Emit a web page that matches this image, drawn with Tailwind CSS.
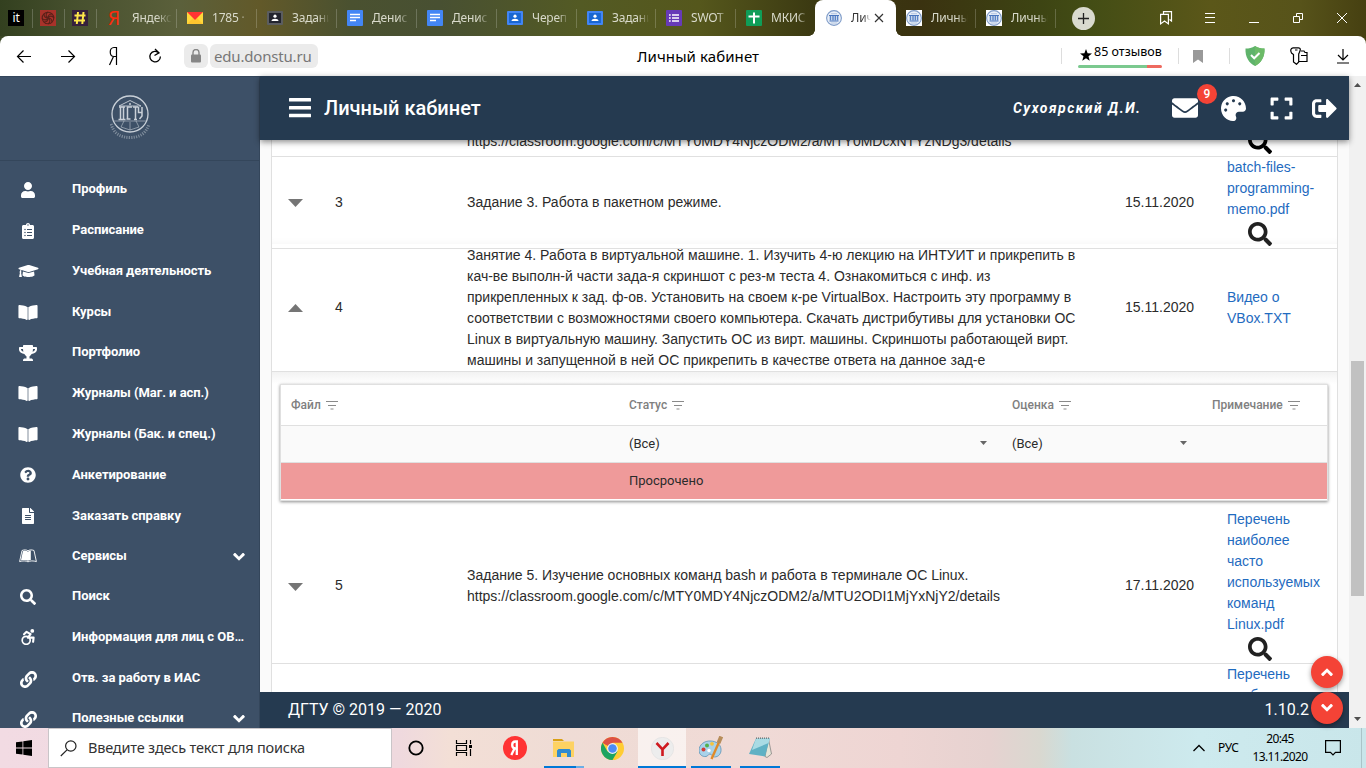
<!DOCTYPE html>
<html lang="ru">
<head>
<meta charset="utf-8">
<title>Личный кабинет</title>
<script src="https://cdn.jsdelivr.net/npm/@tailwindcss/browser@4"></script>
</head>
<body class="w-[1366px] h-[768px] overflow-hidden flex flex-col bg-white font-['Roboto','Liberation_Sans',sans-serif]">

<svg class="hidden">
  <symbol id="user" viewBox="0 0 448 512"><path d="M224 256c70.7 0 128-57.3 128-128S294.7 0 224 0 96 57.3 96 128s57.3 128 128 128zm89.6 32h-16.7c-22.2 10.2-46.9 16-72.9 16s-50.6-5.8-72.9-16h-16.7C60.2 288 0 348.2 0 422.4V464c0 26.5 21.5 48 48 48h352c26.5 0 48-21.5 48-48v-41.6c0-74.2-60.2-134.4-134.4-134.4z"/></symbol>
  <symbol id="clipboard" viewBox="0 0 384 512"><path d="M336 64h-80c0-35.3-28.7-64-64-64s-64 28.7-64 64H48C21.5 64 0 85.5 0 112v352c0 26.5 21.5 48 48 48h288c26.5 0 48-21.5 48-48V112c0-26.5-21.5-48-48-48zM96 424c-13.3 0-24-10.7-24-24s10.7-24 24-24 24 10.7 24 24-10.7 24-24 24zm0-96c-13.3 0-24-10.7-24-24s10.7-24 24-24 24 10.7 24 24-10.7 24-24 24zm0-96c-13.3 0-24-10.7-24-24s10.7-24 24-24 24 10.7 24 24-10.7 24-24 24zm96-192c13.3 0 24 10.7 24 24s-10.7 24-24 24-24-10.7-24-24 10.7-24 24-24zm128 368c0 4.4-3.6 8-8 8H168c-4.4 0-8-3.6-8-8v-16c0-4.4 3.6-8 8-8h144c4.4 0 8 3.6 8 8v16zm0-96c0 4.4-3.6 8-8 8H168c-4.4 0-8-3.6-8-8v-16c0-4.4 3.6-8 8-8h144c4.4 0 8 3.6 8 8v16zm0-96c0 4.4-3.6 8-8 8H168c-4.4 0-8-3.6-8-8v-16c0-4.4 3.6-8 8-8h144c4.4 0 8 3.6 8 8v16z"/></symbol>
  <symbol id="cap" viewBox="0 0 640 512"><path d="M622.34 153.2L343.4 67.5c-15.2-4.67-31.6-4.67-46.79 0L17.66 153.2c-23.54 7.23-23.54 38.36 0 45.59l48.63 14.94c-10.67 13.19-17.23 29.28-17.88 46.9C38.78 266.15 32 276.11 32 288c0 10.78 5.68 19.85 13.86 25.65L20.33 428.53C18.11 438.52 25.71 448 35.94 448h56.11c10.24 0 17.84-9.48 15.62-19.47L82.14 313.65C90.32 307.85 96 298.78 96 288c0-11.57-6.47-21.25-15.66-26.87.76-15.02 8.44-28.3 20.69-36.72L296.6 284.5c9.06 2.78 26.44 6.25 46.79 0l278.95-85.7c23.55-7.24 23.55-38.36 0-45.6zM352.79 315.09c-28.53 8.76-52.84 3.92-65.59 0l-145.02-44.55L128 384c0 35.35 85.96 64 192 64s192-28.65 192-64l-14.18-113.47-145.03 44.56z"/></symbol>
  <symbol id="book" viewBox="0 0 576 512"><path d="M542.22 32.05c-54.8 3.11-163.72 14.43-230.96 55.59-4.64 2.84-7.27 7.89-7.27 13.17v363.87c0 11.55 12.63 18.85 23.28 13.49 69.18-34.82 169.23-44.32 218.7-46.92 16.89-.89 30.02-14.43 30.02-30.66V62.75c.01-17.71-15.35-31.74-33.77-30.7zM264.73 87.64C197.5 46.48 88.58 35.17 33.78 32.05 15.36 31.01 0 45.04 0 62.75V400.6c0 16.24 13.13 29.78 30.02 30.66 49.49 2.6 149.59 12.11 218.77 46.95 10.62 5.35 23.21-1.94 23.21-13.46V100.63c0-5.29-2.62-10.14-7.27-12.99z"/><path d="M268 90h40v380h-40z" opacity=".6"/></symbol>
  <symbol id="trophy" viewBox="0 0 576 512"><path d="M552 64H448V24c0-13.3-10.7-24-24-24H152c-13.3 0-24 10.7-24 24v40H24C10.7 64 0 74.7 0 88v56c0 35.7 22.5 72.4 61.9 100.7 31.5 22.7 69.8 37.1 110 41.7C203.3 338.5 240 360 240 360v72h-48c-35.3 0-64 20.7-64 56v12c0 6.6 5.4 12 12 12h296c6.6 0 12-5.4 12-12v-12c0-35.3-28.7-56-64-56h-48v-72s36.7-21.5 68.1-73.6c40.3-4.6 78.6-19 110-41.7 39.3-28.3 61.9-65 61.9-100.7V88c0-13.3-10.7-24-24-24zM99.3 192.8C74.9 175.2 64 155.6 64 144v-16h64.2c1 32.6 5.8 61.2 12.8 86.2-15.1-5.2-29.2-12.4-41.7-21.4zM512 144c0 16.1-17.7 36.1-35.3 48.8-12.5 9-26.7 16.2-41.8 21.4 7-25 11.8-53.6 12.8-86.2H512v16z"/></symbol>
  <symbol id="question" viewBox="0 0 512 512"><path d="M504 256c0 136.997-111.043 248-248 248S8 392.997 8 256C8 119.083 119.043 8 256 8s248 111.083 248 248zM262.655 90c-54.497 0-89.255 22.957-116.549 63.758-3.536 5.286-2.353 12.415 2.715 16.258l34.699 26.31c5.205 3.947 12.621 3.008 16.665-2.122 17.864-22.658 30.113-35.797 57.303-35.797 20.429 0 45.698 13.148 45.698 32.958 0 14.976-12.363 22.667-32.534 33.976C247.128 238.528 216 254.941 216 296v4c0 6.627 5.373 12 12 12h56c6.627 0 12-5.373 12-12v-1.333c0-28.462 83.186-29.647 83.186-106.667 0-58.002-60.165-102-116.531-102zM256 338c-25.365 0-46 20.635-46 46 0 25.364 20.635 46 46 46s46-20.636 46-46c0-25.365-20.635-46-46-46z"/></symbol>
  <symbol id="file" viewBox="0 0 384 512"><path d="M224 136V0H24C10.7 0 0 10.7 0 24v464c0 13.3 10.7 24 24 24h336c13.3 0 24-10.7 24-24V160H248c-13.2 0-24-10.8-24-24zm64 236c0 6.6-5.4 12-12 12H108c-6.6 0-12-5.4-12-12v-8c0-6.6 5.4-12 12-12h168c6.6 0 12 5.4 12 12v8zm0-64c0 6.6-5.4 12-12 12H108c-6.6 0-12-5.4-12-12v-8c0-6.6 5.4-12 12-12h168c6.6 0 12 5.4 12 12v8zm0-72v8c0 6.6-5.4 12-12 12H108c-6.6 0-12-5.4-12-12v-8c0-6.6 5.4-12 12-12h168c6.6 0 12 5.4 12 12zm96-114.1v6.1H256V0h6.1c6.4 0 12.5 2.5 17 7l97.9 98c4.5 4.5 7 10.6 7 16.9z"/></symbol>
  <symbol id="leanpub" viewBox="0 0 18 16"><path d="M3 2.500C5.300 1.600 7.600 1.700 9 2.800c1.400-1.100 3.700-1.200 6-.3L17.400 13.600c-3-1-6.300-.9-8.400.2-2.100-1.100-5.400-1.200-8.400-.2z" fill="none" stroke="currentColor" stroke-width=".9"/><path d="M3.900 3.200C6 2.500 8 2.800 9 3.700c.7-.6 1.700-1 2.800-1.100v9.300c-1 .1-2 .4-2.800.9-1.800-1-4.400-1.200-7-.5z"/></symbol>
  <symbol id="search" viewBox="0 0 512 512"><path d="M505 442.700L405.300 343c-4.500-4.500-10.600-7-17-7H372c27.600-35.300 44-79.700 44-128C416 93.100 322.900 0 208 0S0 93.100 0 208s93.100 208 208 208c48.300 0 92.700-16.400 128-44v16.300c0 6.400 2.500 12.500 7 17l99.700 99.700c9.400 9.400 24.600 9.400 33.900 0l28.300-28.300c9.400-9.400 9.400-24.600.1-34zM208 336c-70.700 0-128-57.200-128-128 0-70.700 57.200-128 128-128 70.700 0 128 57.200 128 128 0 70.700-57.200 128-128 128z"/></symbol>
  <symbol id="access" viewBox="0 0 16 16"><circle cx="12.300" cy="1.900" r="1.900"/><path d="M4 5.300L6.600 2.800l4 2.300-2.800 3.500h5.800l-.5 4.200" fill="none" stroke="currentColor" stroke-width="2.100" stroke-linecap="round" stroke-linejoin="round"/><circle cx="6.200" cy="11.300" r="4" fill="none" stroke="currentColor" stroke-width="1.700"/></symbol>
  <symbol id="link" viewBox="0 0 512 512"><path d="M326.612 185.391c59.747 59.809 58.927 155.698.36 214.590-.11.12-.24.25-.36.37l-67.2 67.2c-59.270 59.270-155.699 59.262-214.960 0-59.270-59.260-59.270-155.700 0-214.960l37.106-37.106c9.840-9.840 26.786-3.300 27.294 10.606.648 17.722 3.826 35.527 9.690 52.721 1.986 5.822.567 12.262-3.783 16.612l-13.087 13.087c-28.026 28.026-28.905 73.660-1.155 101.960 28.024 28.579 74.086 28.749 102.325.51l67.200-67.190c28.191-28.191 28.073-73.757 0-101.830-3.701-3.694-7.429-6.564-10.341-8.569a16.037 16.037 0 0 1-6.947-12.606c-.396-10.567 3.348-21.456 11.698-29.806l21.054-21.055c5.521-5.521 14.182-6.199 20.584-1.731a152.482 152.482 0 0 1 20.522 17.197zM467.547 44.449c-59.261-59.262-155.690-59.270-214.960 0l-67.200 67.200c-.12.12-.25.25-.36.37-58.566 58.892-59.387 154.781.36 214.590a152.454 152.454 0 0 0 20.521 17.196c6.402 4.468 15.064 3.789 20.584-1.731l21.054-21.055c8.350-8.350 12.094-19.239 11.698-29.806a16.037 16.037 0 0 0-6.947-12.606c-2.912-2.005-6.640-4.875-10.341-8.569-28.073-28.073-28.191-73.639 0-101.830l67.200-67.190c28.239-28.239 74.300-28.069 102.325.51 27.750 28.300 26.872 73.934-1.155 101.960l-13.087 13.087c-4.350 4.350-5.769 10.790-3.783 16.612 5.864 17.194 9.042 34.999 9.690 52.721.509 13.906 17.454 20.446 27.294 10.606l37.106-37.106c59.271-59.259 59.271-155.699.001-214.959z"/></symbol>
  <symbol id="chev" viewBox="0 0 448 512"><path d="M207.029 381.476L12.686 187.132c-9.373-9.373-9.373-24.569 0-33.941l42.667-42.667c9.357-9.357 24.522-9.375 33.901-.04L224 244.505l134.745-134.021c9.379-9.335 24.544-9.317 33.901.04l42.667 42.667c9.373 9.373 9.373 24.569 0 33.941L240.971 381.476c-9.373 9.372-24.569 9.372-33.942 0z"/></symbol>
  <symbol id="mail" viewBox="0 0 512 512"><path d="M502.300 190.800c3.900-3.100 9.700-.2 9.700 4.700V400c0 26.500-21.500 48-48 48H48c-26.500 0-48-21.500-48-48V195.600c0-5 5.700-7.800 9.700-4.700 22.400 17.400 52.100 39.500 154.100 113.600 21.100 15.400 56.700 47.800 92.200 47.600 35.700.3 72-32.800 92.300-47.600 102-74.100 131.600-96.300 154-113.700zM256 320c23.200.4 56.600-29.200 73.400-41.400 132.700-96.300 142.800-104.700 173.400-128.700 5.800-4.500 9.200-11.500 9.200-18.900v-19c0-26.500-21.500-48-48-48H48c-26.500 0-48 21.500-48 48v19c0 7.400 3.400 14.300 9.200 18.900 30.600 23.900 40.700 32.400 173.400 128.700 16.800 12.200 50.200 41.800 73.400 41.400z"/></symbol>
  <symbol id="palette" viewBox="0 0 512 512"><path d="M204.300 5C104.900 24.400 24.800 104.300 5.200 203.400c-37 187 131.700 326.400 258.800 306.700 41.200-6.400 61.400-54.600 42.500-91.700-23.100-45.400 9.900-98.400 60.900-98.400h79.700c35.800 0 64.800-29.600 64.900-65.300C511.500 97.100 368.100-26.900 204.300 5zM96 320c-17.700 0-32-14.300-32-32s14.300-32 32-32 32 14.300 32 32-14.300 32-32 32zm32-128c-17.700 0-32-14.300-32-32s14.300-32 32-32 32 14.300 32 32-14.300 32-32 32zm128-64c-17.700 0-32-14.300-32-32s14.300-32 32-32 32 14.300 32 32-14.300 32-32 32zm128 64c-17.700 0-32-14.300-32-32s14.300-32 32-32 32 14.300 32 32-14.300 32-32 32z"/></symbol>
  <symbol id="expand" viewBox="0 0 448 512"><path d="M0 180V56c0-13.300 10.700-24 24-24h124c6.600 0 12 5.400 12 12v40c0 6.600-5.400 12-12 12H64v84c0 6.600-5.400 12-12 12H12c-6.600 0-12-5.400-12-12zM288 44v40c0 6.600 5.400 12 12 12h84v84c0 6.600 5.400 12 12 12h40c6.600 0 12-5.400 12-12V56c0-13.300-10.700-24-24-24H300c-6.600 0-12 5.400-12 12zm148 276h-40c-6.600 0-12 5.400-12 12v84h-84c-6.600 0-12 5.400-12 12v40c0 6.600 5.400 12 12 12h124c13.300 0 24-10.700 24-24V332c0-6.600-5.400-12-12-12zM160 468v-40c0-6.600-5.400-12-12-12H64v-84c0-6.600-5.400-12-12-12H12c-6.600 0-12 5.400-12 12v124c0 13.300 10.700 24 24 24h124c6.600 0 12-5.400 12-12z"/></symbol>
  <symbol id="signout" viewBox="0 0 512 512"><path d="M497 273L329 441c-15 15-41 4.500-41-17v-96H152c-13.300 0-24-10.700-24-24v-96c0-13.300 10.700-24 24-24h136V88c0-21.400 25.900-32 41-17l168 168c9.300 9.400 9.300 24.600 0 34zM192 436v-40c0-6.600-5.400-12-12-12H96c-17.700 0-32-14.300-32-32V160c0-17.700 14.300-32 32-32h84c6.600 0 12-5.400 12-12V76c0-6.600-5.400-12-12-12H96c-53 0-96 43-96 96v192c0 53 43 96 96 96h84c6.600 0 12-5.400 12-12z"/></symbol>
  <symbol id="filter" viewBox="0 0 12 9"><path d="M0 .5h12M2 4.500h8M4.500 8h3" stroke="currentColor" fill="none"/></symbol>
  <symbol id="docs" viewBox="0 0 16 16"><rect width="16" height="16" rx="1" fill="#4386f5"/><path d="M3 4.500h10M3 7.500h10M3 10.500h6" stroke="#fff" stroke-width="1.700" fill="none"/></symbol>
  <symbol id="room" viewBox="0 0 16 16"><rect y="1" width="16" height="14" rx="1" fill="#4285f4"/><rect x="2" y="3" width="12" height="10" fill="#1967d2"/><circle cx="8" cy="6.200" r="1.600" fill="#fff"/><path d="M4.500 11c0-3 7-3 7 0z" fill="#fff"/></symbol>
  <symbol id="dstu" viewBox="0 0 16 16"><circle cx="8" cy="8" r="7.400" fill="#e8eef7" stroke="#7e9bc8" stroke-width="1.100"/><path d="M3 5.500h10M3.500 11h9" stroke="#4a76bd"/><path d="M4.500 6v4.500M7 6v4.500M9.300 6v4.500M11.600 6v4.500" stroke="#5b84c6" stroke-width="1.500"/><path d="M5 3.700h6M5 13h6" stroke="#a7bcdc" stroke-width=".8"/></symbol>
</svg>

<!-- Browser tabs -->
<div class="h-9 shrink-0 flex items-center bg-[linear-gradient(90deg,#33401f_0,#48512f_80px,#5b603b_180px,#625929_260px,#4a5130_350px,#485032_440px,#535a24_580px,#55571c_700px,#3c3a12_810px,#3a3210_920px,#3d4413_1040px,#434d15_1090px,#5b5719_1210px,#57531a_1300px,#464011_1366px)] text-[12px] tracking-[-0.200px] text-[#d9dacb] font-['Noto_Sans',sans-serif]">
  <div class="w-[33px] h-[19px] flex items-center pl-2 border-r border-white/20"><div class="size-4 bg-black text-white text-[12px] leading-[15px] text-center">it</div></div>
  <div class="w-8 h-[19px] flex items-center pl-[7px] border-r border-white/20"><svg class="size-4" viewBox="0 0 16 16"><rect width="16" height="16" fill="#a8322a"/><g fill="none" stroke="#5a2119" stroke-width="1.100"><circle cx="8" cy="8" r="5.800"/><path d="M8 2c-3 2-2 5 0 6M14 8c-2-3-5-2-6 0M8 14c3-2 2-5 0-6M2 8c2 3 5 2 6 0M4 4c0 3 2 4 4 4M12 4c-3 0-4 2-4 4M12 12c0-3-2-4-4-4M4 12c3 0 4-2 4-4"/></g></svg></div>
  <div class="w-8 h-[19px] flex items-center pl-[7px] border-r border-white/20"><svg class="size-4" viewBox="0 0 16 16"><rect width="16" height="16" fill="#36203d"/><path d="M6 2L4.800 14M11.500 2L10.300 14M2.500 5.500h11M2 10.500h11" stroke="#ffe74a" stroke-width="2" fill="none"/></svg></div>
  <div class="w-20 h-[19px] flex items-center pl-2.5 border-r border-white/20"><span class="w-[25px] pl-px text-[#fc2b0d] text-[19px] leading-4">Я</span><span class="w-[40px] whitespace-nowrap mask-r-from-60%">Яндекс</span></div>
  <div class="w-20 h-[19px] flex items-center pl-2.5 border-r border-white/20 gap-[9px]"><svg class="w-4 h-3" viewBox="0 0 16 12"><rect width="16" height="12" fill="#ffd83b"/><path d="M0 12l6-6 2 2 2-2 6 6z" fill="#ffc52e"/><path d="M0 0h16L8 8z" fill="#f33"/></svg><span class="w-[35px] whitespace-nowrap mask-r-from-80%">1785 ·</span></div>
  <div class="w-20 h-[19px] flex items-center pl-2.5 border-r border-white/20 gap-[9px]"><svg class="size-4 shrink-0" viewBox="0 0 16 16"><rect y="1" width="16" height="14" rx="1" fill="#5b5d60"/><rect x="2" y="3" width="12" height="10" fill="#23252f"/><circle cx="8" cy="6.200" r="1.600" fill="#fff"/><path d="M4.500 11c0-3 7-3 7 0z" fill="#fff"/></svg><span class="w-[37px] whitespace-nowrap mask-r-from-70%">Задани</span></div>
  <div class="w-20 h-[19px] flex items-center pl-2.5 border-r border-white/20 gap-[9px]"><svg class="size-4 shrink-0"><use href="#docs"/></svg><span class="w-[37px] whitespace-nowrap mask-r-from-70%">Денис</span></div>
  <div class="w-20 h-[19px] flex items-center pl-2.5 border-r border-white/20 gap-[9px]"><svg class="size-4 shrink-0"><use href="#docs"/></svg><span class="w-[37px] whitespace-nowrap mask-r-from-70%">Денис</span></div>
  <div class="w-20 h-[19px] flex items-center pl-2.5 border-r border-white/20 gap-[9px]"><svg class="size-4 shrink-0"><use href="#room"/></svg><span class="w-[37px] whitespace-nowrap mask-r-from-70%">Череп</span></div>
  <div class="w-[79px] h-[19px] flex items-center pl-2.5 border-r border-white/20 gap-[9px]"><svg class="size-4 shrink-0"><use href="#room"/></svg><span class="w-[37px] whitespace-nowrap mask-r-from-70%">Задани</span></div>
  <div class="w-20 h-[19px] flex items-center pl-2.5 border-r border-white/20 gap-[9px]"><svg class="size-4 shrink-0" viewBox="0 0 16 16"><rect width="16" height="16" rx="1" fill="#673ab7"/><path d="M6 5h7M6 8h7M6 11h7M3 5h1.700M3 8h1.700M3 11h1.700" stroke="#fff" stroke-width="1.500" fill="none"/></svg><span class="w-[37px] whitespace-nowrap mask-r-from-70%">SWOT</span></div>
  <div class="w-[79px] h-[19px] flex items-center pl-2.5 gap-[9px]"><svg class="size-4 shrink-0" viewBox="0 0 16 16"><rect width="16" height="16" rx="1" fill="#0f9d58"/><path d="M8 2.500v11M2.500 6.500h11" stroke="#fff" stroke-width="2" fill="none"/></svg><span class="w-[37px] whitespace-nowrap mask-r-from-70%">МКИС</span></div>
  <div class="relative w-[81px] h-9 flex items-center pl-[11px] bg-white text-[#333] rounded-t-lg">
    <div class="absolute -left-1.5 bottom-0 size-1.5 bg-[radial-gradient(circle_at_0_0,transparent_5.500px,white_6px)]"></div>
    <div class="absolute -right-1.5 bottom-0 size-1.5 bg-[radial-gradient(circle_at_100%_0,transparent_5.500px,white_6px)]"></div>
    <svg class="size-4 shrink-0"><use href="#dstu"/></svg><span class="ml-[9px] w-[20px] whitespace-nowrap mask-r-from-60%">Лич</span>
    <svg class="ml-[3px] size-2.5" viewBox="0 0 10 10"><path d="M1 1l8 8M9 1L1 9" stroke="#333" stroke-width="1.200"/></svg>
  </div>
  <div class="w-20 h-[19px] flex items-center pl-2.5 border-r border-white/20 gap-[9px]"><svg class="size-4 shrink-0 bg-white"><use href="#dstu"/></svg><span class="w-[37px] whitespace-nowrap mask-r-from-70%">Личны</span></div>
  <div class="w-20 h-[19px] flex items-center pl-2.5 border-r border-white/20 gap-[9px]"><svg class="size-4 shrink-0 bg-white"><use href="#dstu"/></svg><span class="w-[37px] whitespace-nowrap mask-r-from-70%">Личны</span></div>
  <svg class="ml-4 size-[23px]" viewBox="0 0 23 23"><circle cx="11.500" cy="11.500" r="11.500" fill="#d9dacf"/><path d="M6 11.500h11M11.500 6v11" stroke="#222" stroke-width="1.300"/></svg>
  <div class="ml-[49px] flex text-white">
    <div class="w-11 flex justify-center"><svg class="size-4" viewBox="0 0 16 16" fill="none" stroke="currentColor" stroke-width="1.200"><path d="M5.500 4V1.600h8V11l-2-1.500"/><path d="M2.600 4.300h7.800v9.600L6.500 11l-3.900 2.900z"/></svg></div>
    <div class="w-11 flex justify-center"><svg class="size-4" viewBox="0 0 16 16" stroke="currentColor"><path d="M3 3.500h10M3 7.500h10M3 12.500h10"/></svg></div>
    <div class="w-11 flex justify-center"><svg class="size-4" viewBox="0 0 16 16" stroke="currentColor"><path d="M3 12.500h10"/></svg></div>
    <div class="w-11 flex justify-center"><svg class="size-4" viewBox="0 0 16 16" fill="none" stroke="currentColor"><path d="M6.500 6V3.500h6v6H10"/><path d="M3.500 6.500h6v6h-6z"/></svg></div>
    <div class="w-11 flex justify-center"><svg class="size-4" viewBox="0 0 16 16" stroke="currentColor"><path d="M3 3l10 10M13 3L3 13"/></svg></div>
  </div>
</div>

<!-- Address bar -->
<div class="h-10 shrink-0 bg-[linear-gradient(90deg,#3b4726_50%,#46400f_50%)] font-['Noto_Sans',sans-serif]">
 <div class="h-full flex items-center bg-white rounded-t-lg text-black">
  <svg class="ml-4 size-4" viewBox="0 0 16 16" fill="none" stroke="currentColor" stroke-width="1.200"><path d="M15 8.500H1.500M7.500 2.500l-6 6 6 6"/></svg>
  <svg class="ml-7 size-4" viewBox="0 0 16 16" fill="none" stroke="currentColor" stroke-width="1.200"><path d="M1 8.500h13.500M8.500 2.500l6 6-6 6"/></svg>
  <svg class="ml-[30px] w-3 h-5" viewBox="0 0 12 20" fill="none" stroke="currentColor" stroke-width="1.200"><path d="M10.500 19V1.500H8c-5 0-5 9 0 9h2.500M7.500 10.500L3.500 19"/></svg>
  <svg class="ml-[29px] size-4" viewBox="0 0 16 16" fill="none" stroke="currentColor" stroke-width="1.300"><path d="M12 5A5.300 5.300 0 1 0 13.400 8.500M8 1l4 3.800L7.500 7.500"/></svg>
  <div class="ml-[21px] w-6 h-6 rounded-md bg-[#ebebeb] flex items-center justify-center"><svg class="w-2.5 h-3.5" viewBox="0 0 10 14"><rect y="5.500" width="10" height="8" rx="1" fill="#868686"/><path d="M2 6V3.500a3 3 0 0 1 6 0V6" fill="none" stroke="#868686" stroke-width="1.400"/></svg></div>
  <div class="ml-0.5 w-[108px] h-6 rounded-md bg-[#ebebeb] text-[#777] text-[15px] leading-6 pl-1"><span class="tracking-[-0.180px]">edu.donstu.ru</span></div>
  <div class="ml-[319px] w-[424px] text-[15px] whitespace-nowrap tracking-[0.080px]">Личный кабинет</div>
  <div class="h-4 w-px bg-[#ddd]"></div>
  <div class="ml-4 w-[84px] flex flex-col">
    <div class="flex items-center h-[17px] text-[12.500px] leading-[17px] whitespace-nowrap pl-0.5"><svg class="w-3 h-3 mr-1 shrink-0" viewBox="0 0 12 12"><path d="M6 0l1.600 4.300 4.400.2-3.500 2.800 1.200 4.400L6 9.200l-3.700 2.500 1.200-4.400L0 4.500l4.400-.2z"/></svg><span class="-ml-0.5 -mt-1.5">85 отзывов</span></div>
    <div class="mt-0.5 flex h-[3px] rounded-full overflow-hidden -mb-0.5"><div class="w-[69px] bg-[#7bc98f]"></div><div class="flex-1 bg-[#ee6a5f]"></div></div>
  </div>
  <div class="ml-4 h-4 w-px bg-[#ddd]"></div>
  <svg class="ml-[14px] w-2.5 h-[13px]" viewBox="0 0 10 13"><path d="M0 0h10v13L5 9.500 0 13z" fill="#999"/></svg>
  <div class="ml-[26px] h-4 w-px bg-[#ddd]"></div>
  <svg class="ml-[15px] w-5 h-5" viewBox="0 0 20 20"><path d="M10 0c3 2 6 2.500 9.500 2.500C20 11 16 17 10 20 4 17 0 11 .5 2.500 4 2.500 7 2 10 0z" fill="#5fb36b"/><path d="M10 0c3 2 6 2.500 9.500 2.500C20 11 16 17 10 20z" fill="#6cbb68"/><path d="M6 9l3.200 3.300L14.500 7" stroke="#fff" stroke-width="2" fill="none"/></svg>
  <svg class="ml-[25px] w-[18px] h-[18px]" viewBox="0 0 18 18" fill="none" stroke="currentColor" stroke-width="1.200"><path d="M3 .8h5.500c2 0 2.300 1.500 1 4.500L8.700 7v8L6.500 17.300 3.500 15V7.500L1.500 6C.3 4 .5 1 3 .8zM5 3h2.500"/><path d="M11 4h3l1 1.500h2v9H9M11 8.500h6"/></svg>
  <svg class="ml-[27px] size-4" viewBox="0 0 16 16" fill="none" stroke="currentColor" stroke-width="1.200"><path d="M8 1v10.500M3 7l5 5 5-5M2 15h12"/></svg>
 </div>
</div>

<!-- Page -->
<div class="h-[652px] shrink-0 flex">
  <aside class="w-[260px] h-full overflow-hidden bg-[#3d5067] border-r border-[#34465b] text-white">
    <div class="h-[85px] border-t border-b border-[#34465b] flex justify-center pt-[18px]">
      <svg class="w-10 h-[44px]" viewBox="0 0 40 44" fill="none" stroke="#c9d0d8"><circle cx="20" cy="19" r="18" stroke-width="1.300"/><path d="M9 11l11-5.500L31 11z" stroke-width=".9"/><circle cx="20" cy="9" r=".7"/><path d="M10.500 12v12M13.500 12v12M9 12h6M8.500 24.500h7M17.500 24V12h4.500M20.500 24h-4M23 12h5M25.500 12v12M24 24.500h3M28.500 12v5.500h3.500M32 12v9l-2.500 3" stroke-width="1.500"/><path d="M4 26h32M14 26l-3 6 9 3 9-3-3-6M20 27v8" stroke-width=".8" opacity=".7"/><path d="M1 29c3 10 10 13.500 19 13.500S36 39 39 29" stroke-width="3" stroke-dasharray="1.200 1.200" opacity=".45"/></svg>
    </div>
    <nav class="pt-[17px] text-[13px] font-bold leading-[22px] tracking-[-0.040px]">
      <div class="h-[41px] flex items-start"><div class="w-14 h-6 flex items-center justify-center"><svg class="w-3.5 h-4" fill="currentColor"><use href="#user"/></svg></div><span class="ml-4">Профиль</span></div>
      <div class="h-[41px] flex items-start"><div class="w-14 h-6 flex items-center justify-center"><svg class="w-3.5 h-4" fill="currentColor"><use href="#clipboard"/></svg></div><span class="ml-4">Расписание</span></div>
      <div class="h-[41px] flex items-start"><div class="w-14 h-[22px] flex items-center justify-center"><svg class="w-[21px] h-4" fill="currentColor"><use href="#cap"/></svg></div><span class="ml-4">Учебная деятельность</span></div>
      <div class="h-10 flex items-start"><div class="w-14 h-[22px] flex items-center justify-center"><svg class="w-5 h-[17px]" fill="currentColor"><use href="#book"/></svg></div><span class="ml-4">Курсы</span></div>
      <div class="h-[41px] flex items-start"><div class="w-14 h-6 flex items-center justify-center"><svg class="w-5 h-4" fill="currentColor"><use href="#trophy"/></svg></div><span class="ml-4">Портфолио</span></div>
      <div class="h-[41px] flex items-start"><div class="w-14 h-[22px] flex items-center justify-center"><svg class="w-5 h-[17px]" fill="currentColor"><use href="#book"/></svg></div><span class="ml-4">Журналы (Маг. и асп.)</span></div>
      <div class="h-[41px] flex items-start"><div class="w-14 h-[22px] flex items-center justify-center"><svg class="w-5 h-[17px]" fill="currentColor"><use href="#book"/></svg></div><span class="ml-4">Журналы (Бак. и спец.)</span></div>
      <div class="h-[41px] flex items-start"><div class="w-14 h-[22px] flex items-center justify-center"><svg class="size-4" fill="currentColor"><use href="#question"/></svg></div><span class="ml-4">Анкетирование</span></div>
      <div class="h-10 flex items-start"><div class="w-14 h-[22px] flex items-center justify-center"><svg class="w-3.5 h-4" fill="currentColor"><use href="#file"/></svg></div><span class="ml-4">Заказать справку</span></div>
      <div class="h-10 flex items-start"><div class="w-14 h-[22px] flex items-center justify-center"><svg class="w-[18px] h-4" fill="currentColor"><use href="#leanpub"/></svg></div><span class="ml-4">Сервисы</span><svg class="ml-auto mr-3.5 mt-[5px] w-3 h-3.5" fill="currentColor"><use href="#chev"/></svg></div>
      <div class="h-[41px] flex items-start"><div class="w-14 h-6 flex items-center justify-center"><svg class="size-4" fill="currentColor"><use href="#search"/></svg></div><span class="ml-4">Поиск</span></div>
      <div class="h-[41px] flex items-start"><div class="w-14 h-[22px] flex items-center justify-center"><svg class="size-4" fill="currentColor"><use href="#access"/></svg></div><span class="ml-4 w-[174px] truncate tracking-normal">Информация для лиц с ОВЗ и инвалидностью</span></div>
      <div class="h-10 flex items-start"><div class="w-14 h-6 flex items-center justify-center"><svg class="size-[17px]" fill="currentColor"><use href="#link"/></svg></div><span class="ml-4">Отв. за работу в ИАС</span></div>
      <div class="h-10 flex items-start"><div class="w-14 h-6 flex items-center justify-center"><svg class="size-[17px]" fill="currentColor"><use href="#link"/></svg></div><span class="ml-4">Полезные ссылки</span><svg class="ml-auto mr-3.5 mt-[5px] w-3 h-3.5" fill="currentColor"><use href="#chev"/></svg></div>
    </nav>
  </aside>

  <main class="relative w-[1089px] h-full flex flex-col bg-[#fafafa]">
    <header class="relative z-10 h-16 shrink-0 bg-[#253a50] text-white flex items-center pl-7 shadow-[0_2px_6px_rgba(0,0,0,0.450)]">
      <svg class="w-6 h-5" viewBox="0 0 24 20" fill="currentColor"><rect x="1" width="22" height="3.600" rx=".5"/><rect x="1" y="8" width="22" height="3.600" rx=".5"/><rect x="1" y="15.700" width="22" height="3.600" rx=".5"/></svg>
      <h1 class="ml-3 text-[20px] font-medium w-[689px]">Личный кабинет</h1>
      <div class="text-[14px] font-bold italic tracking-[1.480px] w-[160px] whitespace-nowrap">Сухоярский Д.И.</div>
      <div class="relative -ml-px"><svg class="w-[26px] h-[26px]" fill="currentColor"><use href="#mail"/></svg><div class="absolute left-[25px] -top-[11px] size-5 rounded-full bg-[#f44336] text-[12px] font-medium leading-5 text-center">9</div></div>
      <svg class="ml-[23px] size-[25px]" fill="currentColor"><use href="#palette"/></svg>
      <svg class="ml-[23px] w-[25px] h-[25px]" fill="currentColor"><use href="#expand"/></svg>
      <svg class="ml-[18px] size-[25px]" fill="currentColor"><use href="#signout"/></svg>
    </header>

    <div class="h-[552px] shrink-0 overflow-hidden ml-[11px] w-[1067px] border-x border-[#e0e0e0] bg-white text-[14px] leading-[21px] text-[#2b2b2b] font-['Liberation_Sans',Arial,sans-serif]">
      <div class="h-[17px] border-b border-[#e0e0e0] grid grid-cols-[63px_132px_658px_102px_1fr] overflow-hidden">
        <span></span><span></span><span class="-mt-[9px]">https://classroom.google.com/c/MTY0MDY4NjczODM2/a/MTY0MDcxNTYzNDg3/details</span><span></span><svg class="ml-[21px] -mt-[10px] size-6"><use href="#search"/></svg>
      </div>
      <div class="h-[92px] border-b border-[#e0e0e0] grid grid-cols-[63px_132px_658px_102px_1fr] items-center shadow-[inset_0_-4px_0_white,inset_0_-12px_8px_-8px_rgba(0,0,0,0.050)]">
        <svg class="ml-4 w-[15px] h-2 fill-[#757575]" viewBox="0 0 15 8"><path d="M0 0h15L7.500 8z"/></svg><span>3</span><span>Задание 3. Работа в пакетном режиме.</span><span>15.11.2020</span>
        <div class="flex flex-col text-[#1f6bc0]"><span>batch-files-</span><span>programming-</span><span>memo.pdf</span><svg class="ml-[21px] mt-0.5 mb-0.5 size-6 fill-[#212121]"><use href="#search"/></svg></div>
      </div>
      <div class="h-[123px] border-b border-[#e0e0e0] grid grid-cols-[63px_132px_658px_102px_1fr] items-center overflow-hidden">
        <svg class="ml-4 mb-[5px] w-[15px] h-2 fill-[#757575]" viewBox="0 0 15 8"><path d="M0 8h15L7.500 0z"/></svg><span class="pb-[5px]">4</span>
        <p class="self-start -mt-1 whitespace-nowrap">Занятие 4. Работа в виртуальной машине. 1. Изучить 4-ю лекцию на ИНТУИТ и прикрепить в<br>кач-ве выполн-й части зада-я скриншот с рез-м теста 4. Ознакомиться с инф. из<br>прикрепленных к зад. ф-ов. Установить на своем к-ре VirtualBox. Настроить эту программу в<br>соответствии с возможностями своего компьютера. Скачать дистрибутивы для установки ОС<br>Linux в виртуальную машину. Запустить ОС из вирт. машины. Скриншоты работающей вирт.<br>машины и запущенной в ней ОС прикрепить в качестве ответа на данное зад-е</p>
        <span class="pb-[5px]">15.11.2020</span><div class="pb-1 text-[#1f6bc0]">Видео о<br>VBox.TXT</div>
      </div>
      <div class="h-[136px] pt-3 pl-2 bg-[linear-gradient(180deg,#f2f2f2_0,#fff_12px)]">
        <div class="w-[1048px] h-[117px] border border-[#e0e0e0] bg-white shadow-[0_1px_3px_rgba(0,0,0,0.450)] font-['Roboto',sans-serif] text-[13px]">
          <div class="h-[41px] border-b border-[#e0e0e0] grid grid-cols-[338px_383px_200px_1fr] items-center pl-2.5 text-[12px] font-medium text-[#808080]">
            <span class="flex items-center gap-[5px]">Файл <svg class="w-3 h-[9px] text-[#8a8a8a]"><use href="#filter"/></svg></span>
            <span class="flex items-center gap-[5px]">Статус <svg class="w-3 h-[9px] text-[#8a8a8a]"><use href="#filter"/></svg></span>
            <span class="flex items-center gap-[5px]">Оценка <svg class="w-3 h-[9px] text-[#8a8a8a]"><use href="#filter"/></svg></span>
            <span class="flex items-center gap-[5px]">Примечание <svg class="w-3 h-[9px] text-[#8a8a8a]"><use href="#filter"/></svg></span>
          </div>
          <div class="h-[37px] border-b border-[#e0e0e0] bg-[#fafafa] grid grid-cols-[338px_383px_200px_1fr] items-center pl-2.5 pb-0.5">
            <span></span>
            <span class="flex items-center justify-between pr-[25px]">(Все)<svg class="w-[7px] h-1 fill-[#666]" viewBox="0 0 7 4"><path d="M0 0h7L3.500 4z"/></svg></span>
            <span class="flex items-center justify-between pr-[25px]">(Все)<svg class="w-[7px] h-1 fill-[#666]" viewBox="0 0 7 4"><path d="M0 0h7L3.500 4z"/></svg></span>
          </div>
          <div class="h-9 bg-[#ef9a9a] flex items-center pl-[348px] pb-0.5">Просрочено</div>
        </div>
      </div>
      <div class="h-[156px] border-b border-[#e0e0e0] grid grid-cols-[63px_132px_658px_102px_1fr] items-center">
        <svg class="ml-4 mt-0.5 w-[15px] h-2 fill-[#757575]" viewBox="0 0 15 8"><path d="M0 0h15L7.500 8z"/></svg><span>5</span><p>Задание 5. Изучение основных команд bash и работа в терминале ОС Linux.<br>https://classroom.google.com/c/MTY0MDY4NjczODM2/a/MTU2ODI1MjYxNjY2/details</p><span>17.11.2020</span>
        <div class="flex flex-col text-[#1f6bc0]"><span>Перечень</span><span>наиболее</span><span>часто</span><span>используемых</span><span>команд</span><span>Linux.pdf</span><svg class="ml-[21px] mt-0.5 mb-0.5 size-6 fill-[#212121]"><use href="#search"/></svg></div>
      </div>
      <div class="grid grid-cols-[63px_132px_658px_102px_1fr]"><div class="col-start-5 text-[#1f6bc0]">Перечень<br>наиболее</div></div>
    </div>

    <footer class="h-9 shrink-0 bg-[#253a50] text-white text-[16px] flex items-center justify-between pl-7 pr-[40px]"><span>ДГТУ © 2019 — 2020</span><span>1.10.2</span></footer>
    <div class="absolute right-1.5 bottom-10 z-20 size-8 rounded-full bg-[#f44336] text-white shadow-[0_2px_5px_rgba(0,0,0,0.400)] flex items-center justify-center"><svg class="w-3 h-3.5 rotate-180" fill="currentColor"><use href="#chev"/></svg></div>
    <div class="absolute right-1.5 bottom-1 z-20 size-8 rounded-full bg-[#f44336] text-white shadow-[0_2px_5px_rgba(0,0,0,0.400)] flex items-center justify-center"><svg class="w-3 h-3.5" fill="currentColor"><use href="#chev"/></svg></div>
  </main>

  <div class="w-[17px] h-full bg-[#f1f1f1] flex flex-col items-center">
    <svg class="mt-[7px] w-[7px] h-1 fill-[#505050]" viewBox="0 0 7 4"><path d="M0 4h7L3.500 0z"/></svg>
    <div class="mt-[274px] w-[13px] h-[235px] bg-[#c1c1c1]"></div>
    <svg class="mt-auto mb-[7px] w-[7px] h-1 fill-[#505050]" viewBox="0 0 7 4"><path d="M0 0h7L3.500 4z"/></svg>
  </div>
</div>

<!-- Taskbar -->
<div class="h-10 shrink-0 flex items-center bg-[linear-gradient(90deg,#f2dbe3_0,#efd9de_400px,#f3dfd6_450px,#efdcd5_560px,#f0dad6_760px,#eed5d3_900px,#e6d2d0_990px,#d9d8d0_1040px,#c9e0e1_1072px,#cdeaee_1200px,#c9e6ea_1366px)] font-['Noto_Sans',sans-serif] text-black">
  <div class="w-12 flex justify-center"><svg class="size-4" viewBox="0 0 16 16"><path d="M0 2.300L6.500 1.400v6.200H0zM7.300 1.300L16 0v7.600H7.300zM0 8.400h6.500v6.200L0 13.700zM7.300 8.400H16V16l-8.700-1.300z"/></svg></div>
  <div class="w-[344px] h-10 bg-white border border-[#c9c5c8] flex items-center pl-[11px]">
    <svg class="size-[17px]" viewBox="0 0 17 17" fill="none" stroke="#222" stroke-width="1.200"><circle cx="10.800" cy="6" r="5.200"/><path d="M7 9.800L.8 16"/></svg>
    <span class="ml-[11px] text-[14.500px] text-[#333] tracking-[-0.200px]">Введите здесь текст для поиска</span>
  </div>
  <div class="w-12 flex justify-center"><svg class="size-4" viewBox="0 0 16 16"><circle cx="8" cy="8" r="6.700" fill="none" stroke="#000" stroke-width="1.800"/></svg></div>
  <div class="w-12 flex justify-center"><svg class="w-[18px] h-4" viewBox="0 0 18 16" fill="none" stroke="#000" stroke-width="1.200"><path d="M1.500 0v3.500h10V0M1.500 5.500h10v5h-10zM1.500 16v-3.500h10V16M15.500 0v4M15.500 9v7"/><path d="M14 6.500h3" stroke-width="3"/></svg></div>
  <div class="w-[54px] flex justify-center"><svg class="size-6" viewBox="0 0 24 24"><circle cx="12" cy="12" r="12" fill="#f33"/><path d="M13.800 19V5.500h-1.300c-4.400 0-4.400 7 0 7h1.300M11.500 12.500L8.300 19" fill="none" stroke="#fff" stroke-width="2.300"/></svg></div>
  <div class="relative w-[44px] h-10 flex items-center justify-center"><svg class="w-[22px] h-5" viewBox="0 0 22 20"><path d="M0 1h9l2 2H0z" fill="#d9a014"/><path d="M0 3.500h21V19H0z" fill="#fdd262"/><path d="M4 19v-6.500l1.500-1.500h11l1.500 1.500V19h-4v-4H8v4z" fill="#2f8bd0"/></svg><div class="absolute left-[2px] bottom-0 w-8 h-0.5 bg-[#0078d7]"></div><div class="absolute left-[34px] bottom-0 w-2 h-0.5 bg-[#6aaee6]"></div></div>
  <div class="w-[52px] flex justify-center"><svg class="ml-px size-[23px]" viewBox="0 0 23 23"><circle cx="11.500" cy="11.500" r="11.500" fill="#fc3"/><path d="M11.500 11.500L1.540 5.750A11.500 11.500 0 0 1 21.460 5.750H11.500z" fill="#dd5144"/><path d="M1.540 5.750A11.500 11.500 0 0 0 11.500 23L16.500 14.400 11.500 11.500 6.500 14.400z" fill="#1da462"/><path d="M1.540 5.750L6.500 8.600 11.500 5.750z" fill="#dd5144"/><circle cx="11.500" cy="11.500" r="5.400" fill="#f1f1f1"/><circle cx="11.500" cy="11.500" r="4.300" fill="#4c8bf5"/></svg></div>
  <div class="w-12 h-10 bg-white/60 border-b-2 border-[#0078d7] flex items-center justify-center"><svg class="mt-0.5 size-[23px]" viewBox="0 0 23 23"><circle cx="11.500" cy="11.500" r="11.200" fill="#ededed" stroke="#dcdcdc" stroke-width=".5"/><path d="M5.500 6l6 6.300L17.500 6M11.500 12V19" fill="none" stroke="#cf1a20" stroke-width="2.600"/></svg></div>
  <div class="ml-[5px] w-10 h-10 border-b-2 border-[#0078d7] flex items-center justify-center"><svg class="mt-0.5 size-6" viewBox="0 0 24 24"><path d="M12 5C5 4.500 0 9 0 14.500c0 4 3.500 6.500 7 6 2.500-.4 2-2.500 4-2.500 2 0 2 3 4.500 3 4 0 7-3.500 6.500-8C21.500 8 17 5.300 12 5z" fill="#a9d2ea" stroke="#5b92b5" stroke-width=".8"/><circle cx="8" cy="9.500" r="2" fill="#54b04c"/><circle cx="13" cy="7.800" r="1.900" fill="#f6c33c"/><circle cx="4.500" cy="13.500" r="2" fill="#d43c35"/><circle cx="10" cy="14.500" r="1.700" fill="#fff"/><path d="M20.500 5L12.500 23" stroke="#e08a2a" stroke-width="2.400"/><path d="M19.500 7l2.700-6.500" stroke="#b78d5a" stroke-width="4"/></svg></div>
  <div class="ml-[9px] w-10 h-10 border-b-2 border-[#0078d7] flex items-center justify-center"><svg class="mt-0.5 size-6" viewBox="0 0 24 24"><path d="M20.500 3l3 15-4.500 3.500-2-1z" fill="#e6e6d8" stroke="#777" stroke-width=".7"/><path d="M8 2.500L22 2l-5 18.500L1 18z" fill="#5fb1c4"/><path d="M8 2.500L22 2l-1.500 5L4 14z" fill="#a9dbe4"/><path d="M8 2.200h14" stroke="#666" stroke-width="1.200" stroke-dasharray="1 1"/></svg></div>
  <svg class="ml-auto w-3 h-2" viewBox="0 0 12 8" fill="none" stroke="#000" stroke-width="1.300"><path d="M.5 7L6 1.500 11.500 7"/></svg>
  <span class="ml-[13px] w-[34px] text-[12px] tracking-[-0.300px]">РУС</span>
  <div class="w-14 text-center text-[12px] leading-[18px] tracking-[-0.650px] whitespace-nowrap">20:45<br>13.11.2020</div>
  <svg class="ml-[17px] w-4 h-4" viewBox="0 0 16 16" fill="none" stroke="#000" stroke-width="1.200"><path d="M.6 .6h14.800v11.800H10.500L8 15l-2.500-2.600H.6z"/></svg>
  <div class="ml-5 mr-1 w-px h-10 bg-[#aac4c8]"></div>
</div>
</body>
</html>
